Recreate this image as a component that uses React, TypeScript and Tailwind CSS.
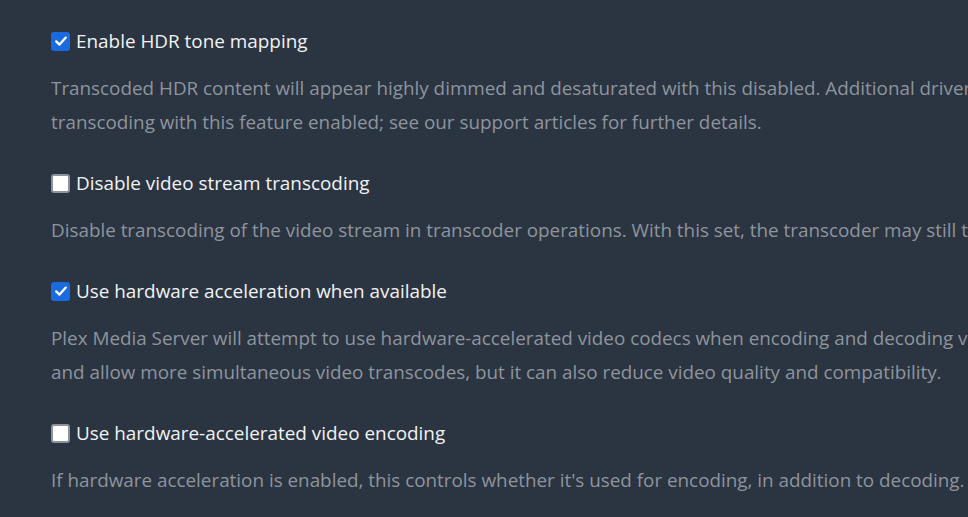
import React from 'react';

type Setting = {
  label: string;
  checked: boolean;
  lines: string[];
};

const SETTINGS: Setting[] = [
  {
    label: 'Enable HDR tone mapping',
    checked: true,
    lines: [
      'Transcoded HDR content will appear highly dimmed and desaturated with this disabled. Additional drivers may be required for HDR',
      'transcoding with this feature enabled; see our support articles for further details.',
    ],
  },
  {
    label: 'Disable video stream transcoding',
    checked: false,
    lines: [
      'Disable transcoding of the video stream in transcoder operations. With this set, the transcoder may still transcode audio and subtitles.',
    ],
  },
  {
    label: 'Use hardware acceleration when available',
    checked: true,
    lines: [
      'Plex Media Server will attempt to use hardware-accelerated video codecs when encoding and decoding video. Hardware acceleration can make transcoding faster',
      'and allow more simultaneous video transcodes, but it can also reduce video quality and compatibility.',
    ],
  },
  {
    label: 'Use hardware-accelerated video encoding',
    checked: false,
    lines: [
      "If hardware acceleration is enabled, this controls whether it's used for encoding, in addition to decoding.",
    ],
  },
];

function CheckBox({ checked }: { checked: boolean }) {
  if (checked) {
    return (
      <span className="flex h-[19px] w-[19px] shrink-0 items-center justify-center rounded-[3px] bg-[#1a6ae0]">
        <svg width="14" height="14" viewBox="0 0 14 14" fill="none">
          <path d="M2.2 7.4 L5.5 10.6 L11.8 3.6" stroke="#ffffff" strokeWidth="2.3" strokeLinecap="round" strokeLinejoin="round" />
        </svg>
      </span>
    );
  }
  return (
    <span className="h-[19px] w-[19px] shrink-0 rounded-[3px] border-2 border-[#8d939c] bg-white" />
  );
}

export default function App() {
  return (
    <div
      className="h-[517px] w-[968px] overflow-hidden bg-[#2b3441] pl-[51px] pt-[29px]"
      style={{ fontFamily: '"Open Sans", "Noto Sans", sans-serif' }}
    >
      {SETTINGS.map((s) => (
        <div key={s.label} className="mb-[32px]">
          <label className="flex h-6 items-center gap-[6px]">
            <CheckBox checked={s.checked} />
            <span className="whitespace-nowrap text-[18.9px] text-[#f1f2f4]">{s.label}</span>
          </label>
          <div className="mt-[18px]">
            {s.lines.map((line) => (
              <div key={line} className="whitespace-nowrap text-[18.85px] leading-[34px] text-[#8e949d]">
                {line}
              </div>
            ))}
          </div>
        </div>
      ))}
    </div>
  );
}
